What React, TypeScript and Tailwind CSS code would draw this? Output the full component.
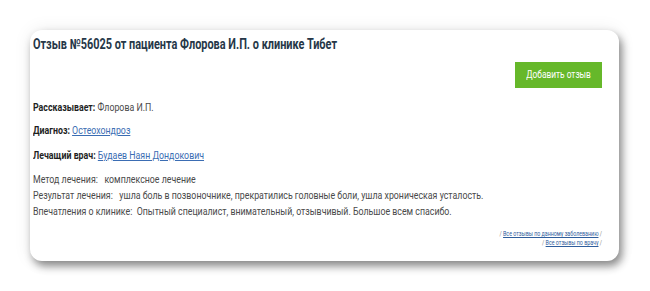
import React from "react";

const font = "font-['Roboto','Liberation_Sans',sans-serif]";

export default function App() {
  return (
    <div className={`w-[650px] h-[291px] bg-white pt-[30px] pl-[30px] ${font}`}>
      <div className="w-[589px] h-[231px] bg-white rounded-[12px] shadow-[3px_5px_8px_rgba(0,0,0,0.45),0_0_18px_rgba(0,0,0,0.08)] pl-[3px] pr-[17px] pt-[5px] flex flex-col">
        <h1 className="text-[14px] leading-[18px] font-bold text-[#263748] whitespace-nowrap origin-left scale-x-[0.78]">
          Отзыв №56025 от пациента Флорова И.П. о клинике Тибет
        </h1>
        <div className="flex justify-end mt-[9px]">
          <button className="w-[87px] h-[26px] bg-[#66b82a] text-white text-[11px] leading-[26px] flex justify-center">
            <span className="inline-block whitespace-nowrap scale-x-[0.76]">Добавить отзыв</span>
          </button>
        </div>
        <div className="origin-left scale-x-[0.8] whitespace-nowrap flex flex-col">
          <p className="mt-[13px] text-[11px] leading-[14px] text-[#4a4a4a]">
            <span className="font-bold text-[#1f1f1f]">Рассказывает:</span> Флорова И.П.
          </p>
          <p className="mt-[9px] text-[11px] leading-[14px] text-[#4a4a4a]">
            <span className="font-bold text-[#1f1f1f]">Диагноз:</span>{" "}
            <a className="text-[#3b6db3] underline">Остеохондроз</a>
          </p>
          <p className="mt-[11px] text-[11px] leading-[14px] text-[#4a4a4a]">
            <span className="font-bold text-[#1f1f1f]">Лечащий врач:</span>{" "}
            <a className="text-[#3b6db3] underline">Будаев Наян Дондокович</a>
          </p>
          <div className="mt-[9px] text-[11px] leading-[16px] text-[#4a4a4a] whitespace-pre">
            <div>Метод лечения:   комплексное лечение</div>
            <div>Результат лечения:   ушла боль в позвоночнике, прекратились головные боли, ушла хроническая усталость.</div>
            <div>Впечатления о клинике:  Опытный специалист, внимательный, отзывчивый. Большое всем спасибо.</div>
          </div>
        </div>
        <div className="mt-[10px] flex flex-col items-end text-[7px] leading-[9px] text-[#888] whitespace-nowrap origin-right scale-x-[0.76]">
          <div>
            / <a className="text-[#2f5d9c] underline">Все отзывы по данному заболеванию</a> /
          </div>
          <div>
            / <a className="text-[#2f5d9c] underline">Все отзывы по врачу</a> /
          </div>
        </div>
      </div>
    </div>
  );
}
